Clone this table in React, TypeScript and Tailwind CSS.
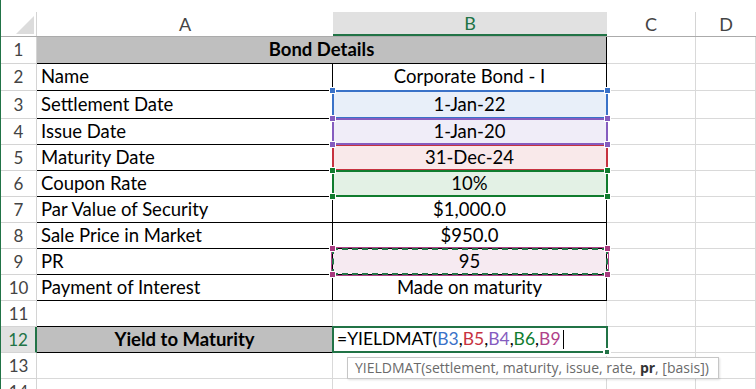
import React from "react";

const font = { fontFamily: "Lato, 'Liberation Sans', sans-serif" };

type Tone = "blue" | "purple" | "red" | "green";

const toneClass: Record<Tone, { bg: string; ring: string; handle: string; z: string }> = {
  blue: { bg: "bg-[#e8eff9]", ring: "shadow-[inset_0_0_0_2px_#3a72c8]", handle: "bg-[#3a72c8]", z: "z-[1]" },
  purple: { bg: "bg-[#f0edf8]", ring: "shadow-[inset_0_0_0_2px_#855cbf]", handle: "bg-[#855cbf]", z: "z-[2]" },
  red: { bg: "bg-[#f9e9ea]", ring: "shadow-[inset_0_0_0_2px_#c7323f]", handle: "bg-[#c7323f]", z: "z-[1]" },
  green: { bg: "bg-[#e3f1e5]", ring: "shadow-[inset_0_0_0_2px_#107c2e]", handle: "bg-[#107c2e]", z: "z-[2]" },
};

function Handles({ color }: { color: string }) {
  return (
    <>
      <span className={`absolute -left-[3px] -top-[3px] w-[7px] h-[7px] border border-white ${color}`} />
      <span className={`absolute -right-[3px] -top-[3px] w-[7px] h-[7px] border border-white ${color}`} />
      <span className={`absolute -left-[3px] -bottom-[3px] w-[7px] h-[7px] border border-white ${color}`} />
      <span className={`absolute -right-[3px] -bottom-[3px] w-[7px] h-[7px] border border-white ${color}`} />
    </>
  );
}

function RangeBox({ tone }: { tone: Tone }) {
  const t = toneClass[tone];
  return (
    <div className={`absolute -left-px -top-px -right-[2px] -bottom-px pointer-events-none ${t.ring} ${t.z}`}>
      <Handles color={t.handle} />
    </div>
  );
}

function RowHead({ n, selected }: { n: number; selected?: boolean }) {
  return (
    <div
      className={`w-[36px] shrink-0 flex items-center justify-center text-[17px] border-b border-[#d4d4d4] ${
        selected
          ? "bg-[#e1e1e1] text-[#217346] border-r-2 border-r-[#217346]"
          : "bg-white text-[#444] border-r border-r-[#d4d4d4]"
      }`}
    >
      {n}
    </div>
  );
}

function Grid({ className = "" }: { className?: string }) {
  return <div className={`shrink-0 border-r border-b border-[#d9d9d9] ${className}`} />;
}

interface DataRow {
  n: number;
  h: string;
  label: string;
  value: string;
  tone?: Tone;
}

const rows: DataRow[] = [
  { n: 2, h: "h-[27px]", label: "Name", value: "Corporate Bond - I" },
  { n: 3, h: "h-[28px]", label: "Settlement Date", value: "1-Jan-22", tone: "blue" },
  { n: 4, h: "h-[26px]", label: "Issue Date", value: "1-Jan-20", tone: "purple" },
  { n: 5, h: "h-[26px]", label: "Maturity Date", value: "31-Dec-24", tone: "red" },
  { n: 6, h: "h-[26px]", label: "Coupon Rate", value: "10%", tone: "green" },
  { n: 7, h: "h-[26px]", label: "Par Value of Security", value: "$1,000.0" },
  { n: 8, h: "h-[26px]", label: "Sale Price in Market", value: "$950.0" },
];

export default function App() {
  return (
    <div className="w-[756px] h-[389px] overflow-hidden bg-white text-black border-l border-[#217346]" style={font}>
      <div className="h-[12px]" />
      {/* column headers */}
      <div className="flex h-[25px] text-[18px] text-[#444] border-b border-[#ababab]">
        <div className="w-[36px] shrink-0 relative border-r border-[#d4d4d4]">
          <div className="absolute right-[2px] bottom-[2px] w-0 h-0 border-l-[18px] border-l-transparent border-b-[18px] border-b-[#dcdcdc]" />
        </div>
        <div className="w-[296px] shrink-0 flex items-center justify-center">A</div>
        <div className="w-[274px] shrink-0 flex items-center justify-center bg-[#e1e1e1] text-[#217346] border-b-2 border-[#217346]">
          B
        </div>
        <div className="w-[89px] shrink-0 flex items-center justify-center border-r border-[#d4d4d4]">C</div>
        <div className="w-[60px] shrink-0 flex items-center justify-center">D</div>
      </div>

      {/* row 1 */}
      <div className="flex h-[27px] text-[18.5px]">
        <RowHead n={1} />
        <div className="w-[570px] shrink-0 flex items-center justify-center font-bold bg-[#bfbfbf] border-r border-b border-black">
          Bond Details
        </div>
        <Grid className="w-[89px]" />
        <Grid className="w-[60px]" />
      </div>

      {rows.map((r) => (
        <div key={r.n} className={`flex text-[18.5px] ${r.h}`}>
          <RowHead n={r.n} />
          <div className="w-[296px] shrink-0 flex items-center pl-[4px] border-r border-b border-black">{r.label}</div>
          <div
            className={`relative w-[274px] shrink-0 flex items-center justify-center border-r border-b border-black ${
              r.tone ? toneClass[r.tone].bg : ""
            }`}
          >
            {r.value}
            {r.tone && <RangeBox tone={r.tone} />}
          </div>
          <Grid className="w-[89px]" />
          <Grid className="w-[60px]" />
        </div>
      ))}

      {/* row 9 */}
      <div className="flex h-[26px] text-[18.5px]">
        <RowHead n={9} />
        <div className="w-[296px] shrink-0 flex items-center pl-[4px] border-r border-b border-black">PR</div>
        <div className="relative w-[274px] shrink-0 flex items-center justify-center bg-[#f6eaf1] border-r border-b border-black">
          95
          <div className="absolute -left-px -top-px -right-[2px] -bottom-px z-[2] border-2 border-dashed border-[#217346] shadow-[0_0_0_1px_#b0428a]">
            <span className="absolute -left-[5px] -top-[5px] w-[7px] h-[7px] border border-white bg-[#a8397f]" />
            <span className="absolute -right-[5px] -top-[5px] w-[7px] h-[7px] border border-white bg-[#a8397f]" />
            <span className="absolute -left-[5px] -bottom-[5px] w-[7px] h-[7px] border border-white bg-[#a8397f]" />
            <span className="absolute -right-[5px] -bottom-[5px] w-[7px] h-[7px] border border-white bg-[#a8397f]" />
          </div>
        </div>
        <Grid className="w-[89px]" />
        <Grid className="w-[60px]" />
      </div>

      {/* row 10 */}
      <div className="flex h-[26px] text-[18.5px]">
        <RowHead n={10} />
        <div className="w-[296px] shrink-0 flex items-center pl-[4px] border-r border-b border-black">
          Payment of Interest
        </div>
        <div className="w-[274px] shrink-0 flex items-center justify-center border-r border-b border-black">
          Made on maturity
        </div>
        <Grid className="w-[89px]" />
        <Grid className="w-[60px]" />
      </div>

      {/* row 11 */}
      <div className="flex h-[26px] text-[18.5px]">
        <RowHead n={11} />
        <div className="w-[296px] shrink-0 border-r border-r-[#d9d9d9] border-b border-b-black" />
        <Grid className="w-[274px]" />
        <Grid className="w-[89px]" />
        <Grid className="w-[60px]" />
      </div>

      {/* row 12 */}
      <div className="flex h-[26px] text-[18.5px]">
        <RowHead n={12} selected />
        <div className="w-[296px] shrink-0 flex items-center justify-center font-bold bg-[#bfbfbf] border-r border-b border-black">
          Yield to Maturity
        </div>
        <div className="relative w-[274px] shrink-0 flex items-center pl-[4px] text-[17.5px] border-r border-b border-[#d9d9d9]">
          <span>=YIELDMAT(</span>
          <span className="text-[#3a72c8]">B3</span>
          <span>,</span>
          <span className="text-[#c7323f]">B5</span>
          <span>,</span>
          <span className="text-[#855cbf]">B4</span>
          <span>,</span>
          <span className="text-[#107c2e]">B6</span>
          <span>,</span>
          <span className="text-[#b0428a]">B9</span>
          <span className="ml-[2px] w-px h-[19px] bg-black" />
          <div className="absolute -left-px -top-px -right-[2px] -bottom-px z-[3] border-2 border-[#217346]">
            <span className="absolute -right-[5px] -bottom-[5px] w-[8px] h-[8px] border-2 border-white bg-[#217346]" />
          </div>
        </div>
        <Grid className="w-[89px]" />
        <Grid className="w-[60px]" />
      </div>

      {/* row 13 */}
      <div className="flex h-[26px] text-[18.5px]">
        <RowHead n={13} />
        <Grid className="w-[296px]" />
        <div className="relative w-[274px] shrink-0 border-r border-b border-[#d9d9d9]">
          <div
            className="absolute left-[14px] top-[4px] z-[4] h-[22px] w-[372px] px-[7px] bg-white border border-[#c6c6c6] shadow-[1px_1px_2px_rgba(0,0,0,0.12)] text-[14px] leading-[20px] text-[#6a6a6a] whitespace-nowrap"
            style={{ fontFamily: "'Open Sans', 'Liberation Sans', sans-serif" }}
          >
            <span>
              YIELDMAT(settlement, maturity, issue, rate, <b className="text-[#333]">pr</b>, [basis])
            </span>
          </div>
        </div>
        <Grid className="w-[89px]" />
        <Grid className="w-[60px]" />
      </div>

      {/* row 14 */}
      <div className="flex h-[26px] text-[18.5px]">
        <RowHead n={14} />
        <Grid className="w-[296px]" />
        <Grid className="w-[274px]" />
        <Grid className="w-[89px]" />
        <Grid className="w-[60px]" />
      </div>
    </div>
  );
}
